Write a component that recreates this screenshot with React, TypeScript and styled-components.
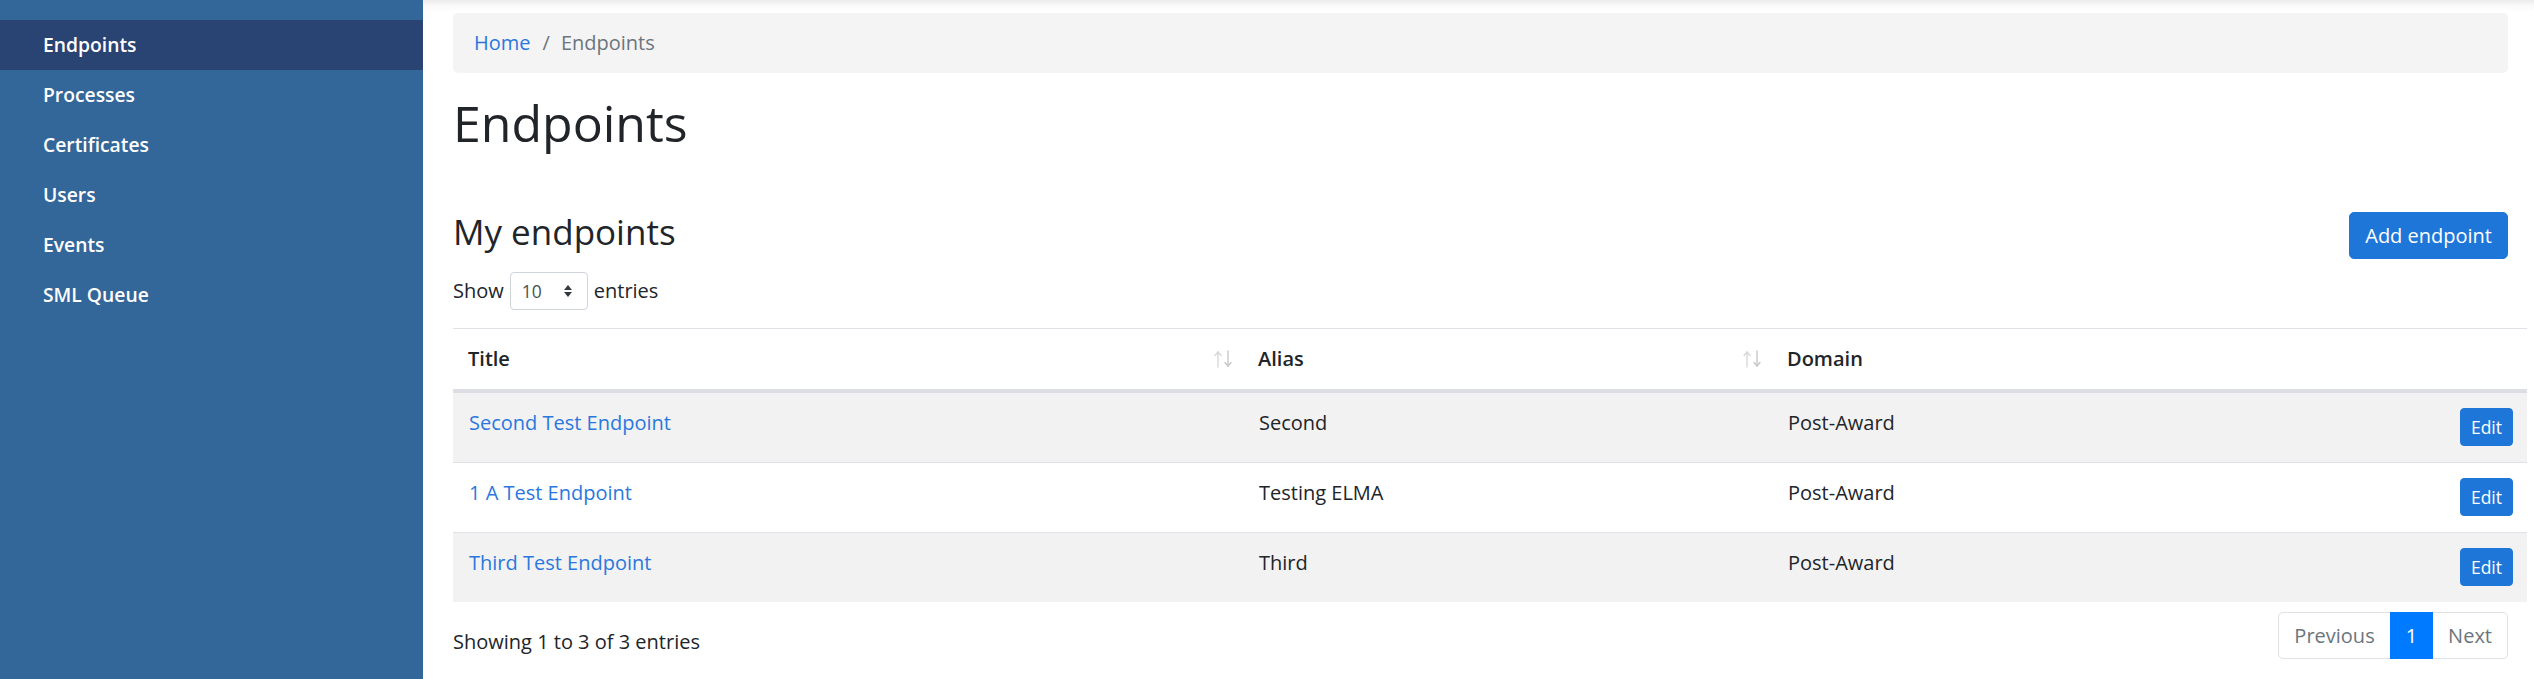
import React from "react";
import styled, { createGlobalStyle } from "styled-components";

const GlobalStyle = createGlobalStyle`
  html, body { margin: 0; padding: 0; }
  body {
    font-family: "Open Sans", "Noto Sans", "Liberation Sans", sans-serif;
    font-size: 20px;
    line-height: 1.5;
    color: #212529;
    background: #fff;
  }
  * { box-sizing: border-box; }
`;

const Shell = styled.div`
  display: flex;
  min-height: 679px;
`;

const Sidebar = styled.nav`
  width: 423px;
  flex: 0 0 423px;
  background: #336699;
  padding-top: 20px;
  box-shadow: 1px 0 2px rgba(0, 0, 0, 0.08);
`;

const NavItem = styled.a<{ $active?: boolean }>`
  display: flex;
  align-items: center;
  height: 50px;
  padding-left: 43px;
  color: #fff;
  font-size: 19.3px;
  font-weight: 600;
  text-decoration: none;
  background: ${(p) => (p.$active ? "#294372" : "transparent")};
`;

const Main = styled.main`
  flex: 1;
  min-width: 0;
  padding: 13px 26px 0 30px;
  background: linear-gradient(#ececec 0, #fafafa 6px, #fff 12px);
`;

const Breadcrumb = styled.ol`
  display: flex;
  align-items: center;
  height: 60px;
  margin: 0;
  padding: 0 21px;
  list-style: none;
  background: #f4f4f4;
  border-radius: 5px;
`;

const Crumb = styled.li`
  color: #6c757d;
  & + &::before {
    content: "/";
    color: #6c757d;
    padding: 0 11px 0 12px;
  }
`;

const Link = styled.a`
  color: #2a78de;
  text-decoration: none;
`;

const Title = styled.h1`
  margin: 20px 0 0;
  font-size: 50px;
  font-weight: 400;
  line-height: 1.2;
`;

const SectionHead = styled.div`
  display: flex;
  justify-content: space-between;
  align-items: flex-start;
  margin-top: 58px;
`;

const SubTitle = styled.h3`
  margin: 0;
  font-size: 35px;
  font-weight: 400;
  line-height: 1.2;
`;

const Button = styled.button<{ $small?: boolean }>`
  font-family: inherit;
  border: 1px solid #1e76d9;
  color: #fff;
  background: #1e76d9;
  cursor: pointer;
  line-height: 1.5;
  font-size: ${(p) => (p.$small ? "17.5px" : "20px")};
  padding: ${(p) => (p.$small ? "5px 10px" : "7.5px 15px")};
  border-radius: ${(p) => (p.$small ? "4px" : "5px")};
  margin-top: ${(p) => (p.$small ? "0" : "1px")};
`;

const LengthRow = styled.div`
  display: flex;
  align-items: center;
  gap: 6px;
  margin-top: 13px;
`;

const SelectBox = styled.div`
  display: flex;
  align-items: center;
  justify-content: space-between;
  width: 78px;
  height: 38px;
  padding: 0 14px 0 11px;
  border: 1px solid #ced4da;
  border-radius: 4px;
  font-size: 17.5px;
  color: #495057;
`;

const TableWrap = styled.div`
  margin: 18px -19px 0 0;
`;

const Columns = `
  display: grid;
  grid-template-columns: 790px 529px 1fr 80px;
`;

const HeadRow = styled.div`
  ${Columns}
  align-items: center;
  height: 64px;
  border-top: 1px solid #dee2e6;
  border-bottom: 3px solid #dcdee3;
  font-weight: 600;
`;

const HeadCell = styled.div`
  display: flex;
  align-items: center;
  justify-content: space-between;
  padding: 0 10px 0 15px;
`;

const BodyRow = styled.div<{ $striped?: boolean }>`
  ${Columns}
  align-items: start;
  height: 70px;
  padding-top: 15px;
  border-top: 1px solid #dcdee3;
  background: ${(p) => (p.$striped ? "#f2f2f2" : "#fff")};
  & + & {
    border-top-color: #dee2e6;
  }
`;

const Cell = styled.div<{ $end?: boolean }>`
  display: flex;
  align-items: flex-start;
  justify-content: ${(p) => (p.$end ? "flex-end" : "flex-start")};
  padding: ${(p) => (p.$end ? "0 14px 0 0" : "0 16px")};
  line-height: 30px;
`;

const Footer = styled.div`
  display: flex;
  justify-content: space-between;
  align-items: flex-start;
  margin-top: 10px;
`;

const Info = styled.div`
  padding-top: 15px;
`;

const Pager = styled.ul`
  display: flex;
  margin: 0;
  padding: 0;
  list-style: none;
`;

const PageLink = styled.li<{ $active?: boolean; $pos?: "first" | "last" }>`
  padding: 10px 15px;
  line-height: 1.25;
  border: 1px solid ${(p) => (p.$active ? "#007bff" : "#dee2e6")};
  margin-left: -1px;
  color: ${(p) => (p.$active ? "#fff" : "#6c757d")};
  background: ${(p) => (p.$active ? "#007bff" : "#fff")};
  border-radius: ${(p) =>
    p.$pos === "first" ? "5px 0 0 5px" : p.$pos === "last" ? "0 5px 5px 0" : "0"};
  position: ${(p) => (p.$active ? "relative" : "static")};
`;

const SortIcon = () => (
  <svg width="20" height="18" viewBox="0 0 20 18" fill="none" strokeWidth="1.3" strokeLinecap="round">
    <g stroke="#d6d6d6">
      <path d="M5 17V2" />
      <path d="M2 5.5L5 2l3 3.5" />
    </g>
    <g stroke="#c4c4c4">
      <path d="M15 1v15" />
      <path d="M12 12.5l3 3.5 3-3.5" />
    </g>
  </svg>
);

const SelectArrows = () => (
  <svg width="10" height="14" viewBox="0 0 10 14">
    <path d="M5 1L9 6H1z" fill="#343a40" />
    <path d="M5 13L1 8h8z" fill="#343a40" />
  </svg>
);

const nav = ["Endpoints", "Processes", "Certificates", "Users", "Events", "SML Queue"];

const rows = [
  { title: "Second Test Endpoint", alias: "Second", domain: "Post-Award" },
  { title: "1 A Test Endpoint", alias: "Testing ELMA", domain: "Post-Award" },
  { title: "Third Test Endpoint", alias: "Third", domain: "Post-Award" },
];

export default function App() {
  return (
    <>
      <GlobalStyle />
      <Shell>
        <Sidebar>
          {nav.map((n, i) => (
            <NavItem key={n} $active={i === 0}>
              {n}
            </NavItem>
          ))}
        </Sidebar>
        <Main>
          <Breadcrumb>
            <Crumb>
              <Link>Home</Link>
            </Crumb>
            <Crumb>Endpoints</Crumb>
          </Breadcrumb>
          <Title>Endpoints</Title>
          <SectionHead>
            <SubTitle>My endpoints</SubTitle>
            <Button>Add endpoint</Button>
          </SectionHead>
          <LengthRow>
            <span>Show</span>
            <SelectBox>
              <span>10</span>
              <SelectArrows />
            </SelectBox>
            <span>entries</span>
          </LengthRow>
          <TableWrap>
            <HeadRow>
              <HeadCell>
                <span>Title</span>
                <SortIcon />
              </HeadCell>
              <HeadCell>
                <span>Alias</span>
                <SortIcon />
              </HeadCell>
              <HeadCell>
                <span>Domain</span>
              </HeadCell>
              <HeadCell />
            </HeadRow>
            {rows.map((r, i) => (
              <BodyRow key={r.title} $striped={i % 2 === 0}>
                <Cell>
                  <Link>{r.title}</Link>
                </Cell>
                <Cell>{r.alias}</Cell>
                <Cell>{r.domain}</Cell>
                <Cell $end>
                  <Button $small>Edit</Button>
                </Cell>
              </BodyRow>
            ))}
          </TableWrap>
          <Footer>
            <Info>Showing 1 to 3 of 3 entries</Info>
            <Pager>
              <PageLink $pos="first">Previous</PageLink>
              <PageLink $active>1</PageLink>
              <PageLink $pos="last">Next</PageLink>
            </Pager>
          </Footer>
        </Main>
      </Shell>
    </>
  );
}
